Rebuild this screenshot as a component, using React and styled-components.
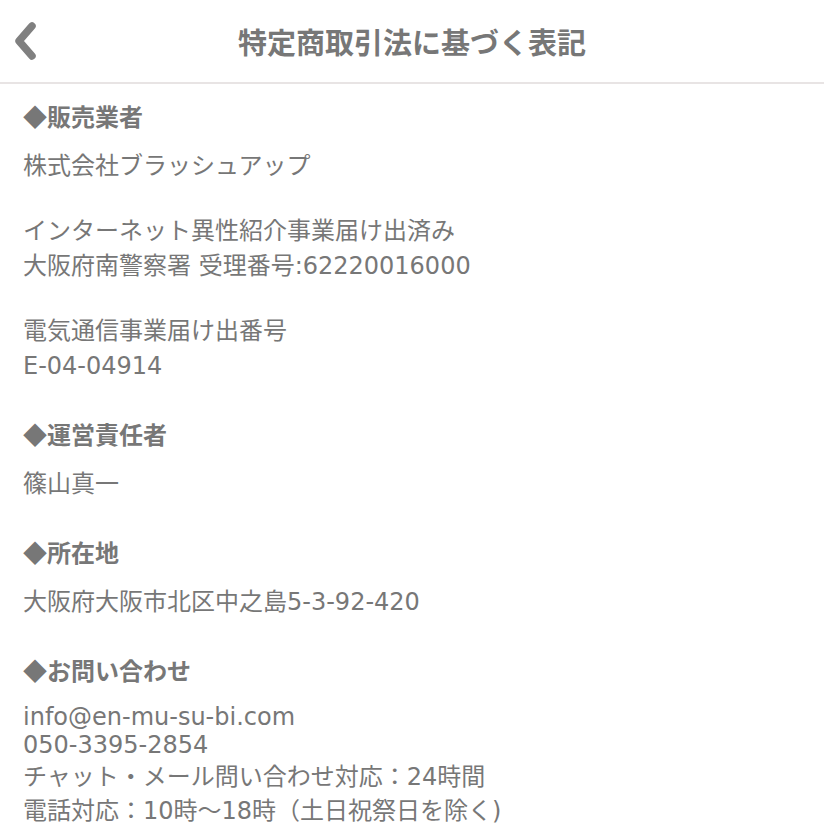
import React from 'react'
import styled, { createGlobalStyle } from 'styled-components'

const GlobalStyle = createGlobalStyle`
  html, body {
    margin: 0;
    padding: 0;
    background: #ffffff;
  }
  body {
    font-family: "Noto Sans CJK JP", "Noto Sans", sans-serif;
    color: #777777;
  }
`

//#region styled components
const StyledPage = styled('div')`
  width: 824px;
  min-height: 838px;
  background: #fff;
`
const StyledHeader = styled('header')`
  position: relative;
  height: 82px;
  border-bottom: 2px solid #e8e4e4;
  display: flex;
  align-items: center;
  justify-content: center;
`
const StyledBackButton = styled('button')`
  position: absolute;
  left: 8px;
  top: 20px;
  width: 36px;
  height: 42px;
  padding: 0;
  border: none;
  background: none;
  display: flex;
  align-items: center;
  justify-content: center;
  cursor: pointer;
`
const StyledTitle = styled('h1')`
  margin: 0;
  font-size: 29px;
  font-weight: bold;
  color: #777;
`
const StyledMain = styled('main')`
  padding: 14px 23px 0;
`
const StyledSection = styled('section')`
  & + & {
    margin-top: 32px;
  }
`
const StyledHeading = styled('h2')`
  margin: 0 0 15px;
  font-family: "Noto Sans CJK JP", sans-serif;
  font-size: 24px;
  line-height: 36px;
  font-weight: bold;
  color: #777;
`
const StyledParagraph = styled('p')`
  margin: 0;
  font-family: "DejaVu Sans", "Noto Sans CJK JP", sans-serif;
  font-size: 24px;
  line-height: 35px;
  color: #777;
  & + & {
    margin-top: 30px;
  }
`
const StyledLine = styled('div')`
  font-family: "DejaVu Sans", "Noto Sans CJK JP", sans-serif;
  font-size: 24px;
  line-height: ${props => props.$height || 35}px;
  color: #777;
`
//#endregion

const BackIcon = () => (
  <svg width="30" height="40" viewBox="0 0 30 40">
    <path
      d="M21 5 L8 20 L21 35"
      fill="none"
      stroke="#808080"
      strokeWidth="7.5"
      strokeLinecap="round"
      strokeLinejoin="round"
    />
  </svg>
)

const App = () => {
  return (
    <StyledPage>
      <GlobalStyle />
      <StyledHeader>
        <StyledBackButton aria-label="戻る">
          <BackIcon />
        </StyledBackButton>
        <StyledTitle>特定商取引法に基づく表記</StyledTitle>
      </StyledHeader>
      <StyledMain>
        <StyledSection>
          <StyledHeading>◆販売業者</StyledHeading>
          <StyledParagraph>株式会社ブラッシュアップ</StyledParagraph>
          <StyledParagraph>
            インターネット異性紹介事業届け出済み
            <br />
            大阪府南警察署 受理番号:62220016000
          </StyledParagraph>
          <StyledParagraph>
            電気通信事業届け出番号
            <br />
            E-04-04914
          </StyledParagraph>
        </StyledSection>
        <StyledSection>
          <StyledHeading>◆運営責任者</StyledHeading>
          <StyledParagraph>篠山真一</StyledParagraph>
        </StyledSection>
        <StyledSection>
          <StyledHeading>◆所在地</StyledHeading>
          <StyledParagraph>大阪府大阪市北区中之島5-3-92-420</StyledParagraph>
        </StyledSection>
        <StyledSection>
          <StyledHeading>◆お問い合わせ</StyledHeading>
          <StyledLine $height={28}>info@en-mu-su-bi.com</StyledLine>
          <StyledLine $height={28}>050-3395-2854</StyledLine>
          <StyledLine $height={36}>チャット・メール問い合わせ対応：24時間</StyledLine>
          <StyledLine $height={32}>電話対応：10時〜18時（土日祝祭日を除く)</StyledLine>
        </StyledSection>
      </StyledMain>
    </StyledPage>
  )
}

export default App
